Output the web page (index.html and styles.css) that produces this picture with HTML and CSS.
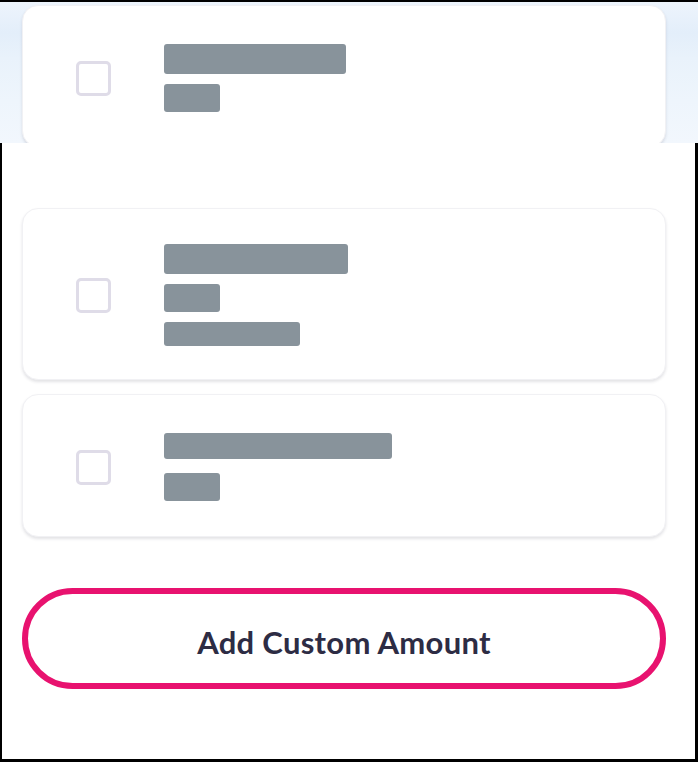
FILE: index.html
```html
<!DOCTYPE html>
<html lang="en">
<head>
<meta charset="utf-8">
<title>Select amount</title>
<link rel="stylesheet" href="styles.css">
</head>
<body>
<div class="screen">
  <div class="backdrop">
    <div class="card card--peek">
      <span class="checkbox"></span>
      <div class="lines">
        <span class="bar bar--h30" style="width:182px"></span>
        <span class="bar bar--h28" style="width:56px"></span>
      </div>
    </div>
  </div>
  <div class="sheet">
    <div class="card card--tall">
      <span class="checkbox"></span>
      <div class="lines">
        <span class="bar bar--h30" style="width:184px"></span>
        <span class="bar bar--h28" style="width:56px"></span>
        <span class="bar bar--h24" style="width:136px"></span>
      </div>
    </div>
    <div class="card">
      <span class="checkbox"></span>
      <div class="lines lines--wide">
        <span class="bar bar--h26" style="width:228px"></span>
        <span class="bar bar--h28" style="width:56px"></span>
      </div>
    </div>
    <button class="custom-btn" type="button">Add Custom Amount</button>
  </div>
</div>
</body>
</html>
```

FILE: styles.css
```css
html, body {
  margin: 0;
  padding: 0;
}

body {
  background: #000;
  width: 698px;
  height: 762px;
  overflow: hidden;
  font-family: Lato, "Open Sans", sans-serif;
}

.screen {
  display: flex;
  flex-direction: column;
  height: 762px;
  padding-top: 2px;
  box-sizing: border-box;
}

.backdrop {
  height: 141px;
  padding: 3px 32px 0 22px;
  box-sizing: border-box;
  background: linear-gradient(180deg, #edf4fc 0%, #e3eefa 22%, #e9f2fb 40%, #eef5fc 70%, #f2f7fd 100%);
}

.sheet {
  flex: 1;
  background: #fff;
  margin: 0 3px 3px 2px;
  padding: 65px 29px 0 20px;
  display: flex;
  flex-direction: column;
  gap: 14px;
}

.card {
  display: flex;
  align-items: center;
  gap: 53px;
  background: #fff;
  border: 1px solid #f1f1f4;
  border-radius: 16px;
  padding: 38px 53px 35px;
  box-shadow: 0 2px 3px rgba(40, 40, 60, 0.13);
}

.card--peek {
  height: 142px;
  box-sizing: border-box;
  padding-top: 38px;
  padding-bottom: 34px;
}

.card--tall {
  padding-top: 35px;
  padding-bottom: 33px;
}

.checkbox {
  flex: none;
  width: 35px;
  height: 35px;
  box-sizing: border-box;
  border: 3px solid #dfdce8;
  border-radius: 5px;
  background: #fff;
}

.lines {
  display: flex;
  flex-direction: column;
  align-items: flex-start;
  gap: 10px;
}

.lines--wide {
  gap: 14px;
}

.bar {
  display: block;
  background: #88939b;
  border-radius: 3px;
}

.bar--h30 { height: 30px; }
.bar--h28 { height: 28px; }
.bar--h26 { height: 26px; }
.bar--h24 { height: 24px; }

.custom-btn {
  flex: none;
  margin-top: 37px;
  height: 101px;
  width: 100%;
  border: 6px solid #e8126f;
  border-radius: 60px;
  background: #fff;
  color: #2d2c44;
  font-family: Lato, "Open Sans", sans-serif;
  font-weight: 700;
  font-size: 31px;
  letter-spacing: 0.3px;
  padding: 7px 0 0;
  cursor: pointer;
}
```
